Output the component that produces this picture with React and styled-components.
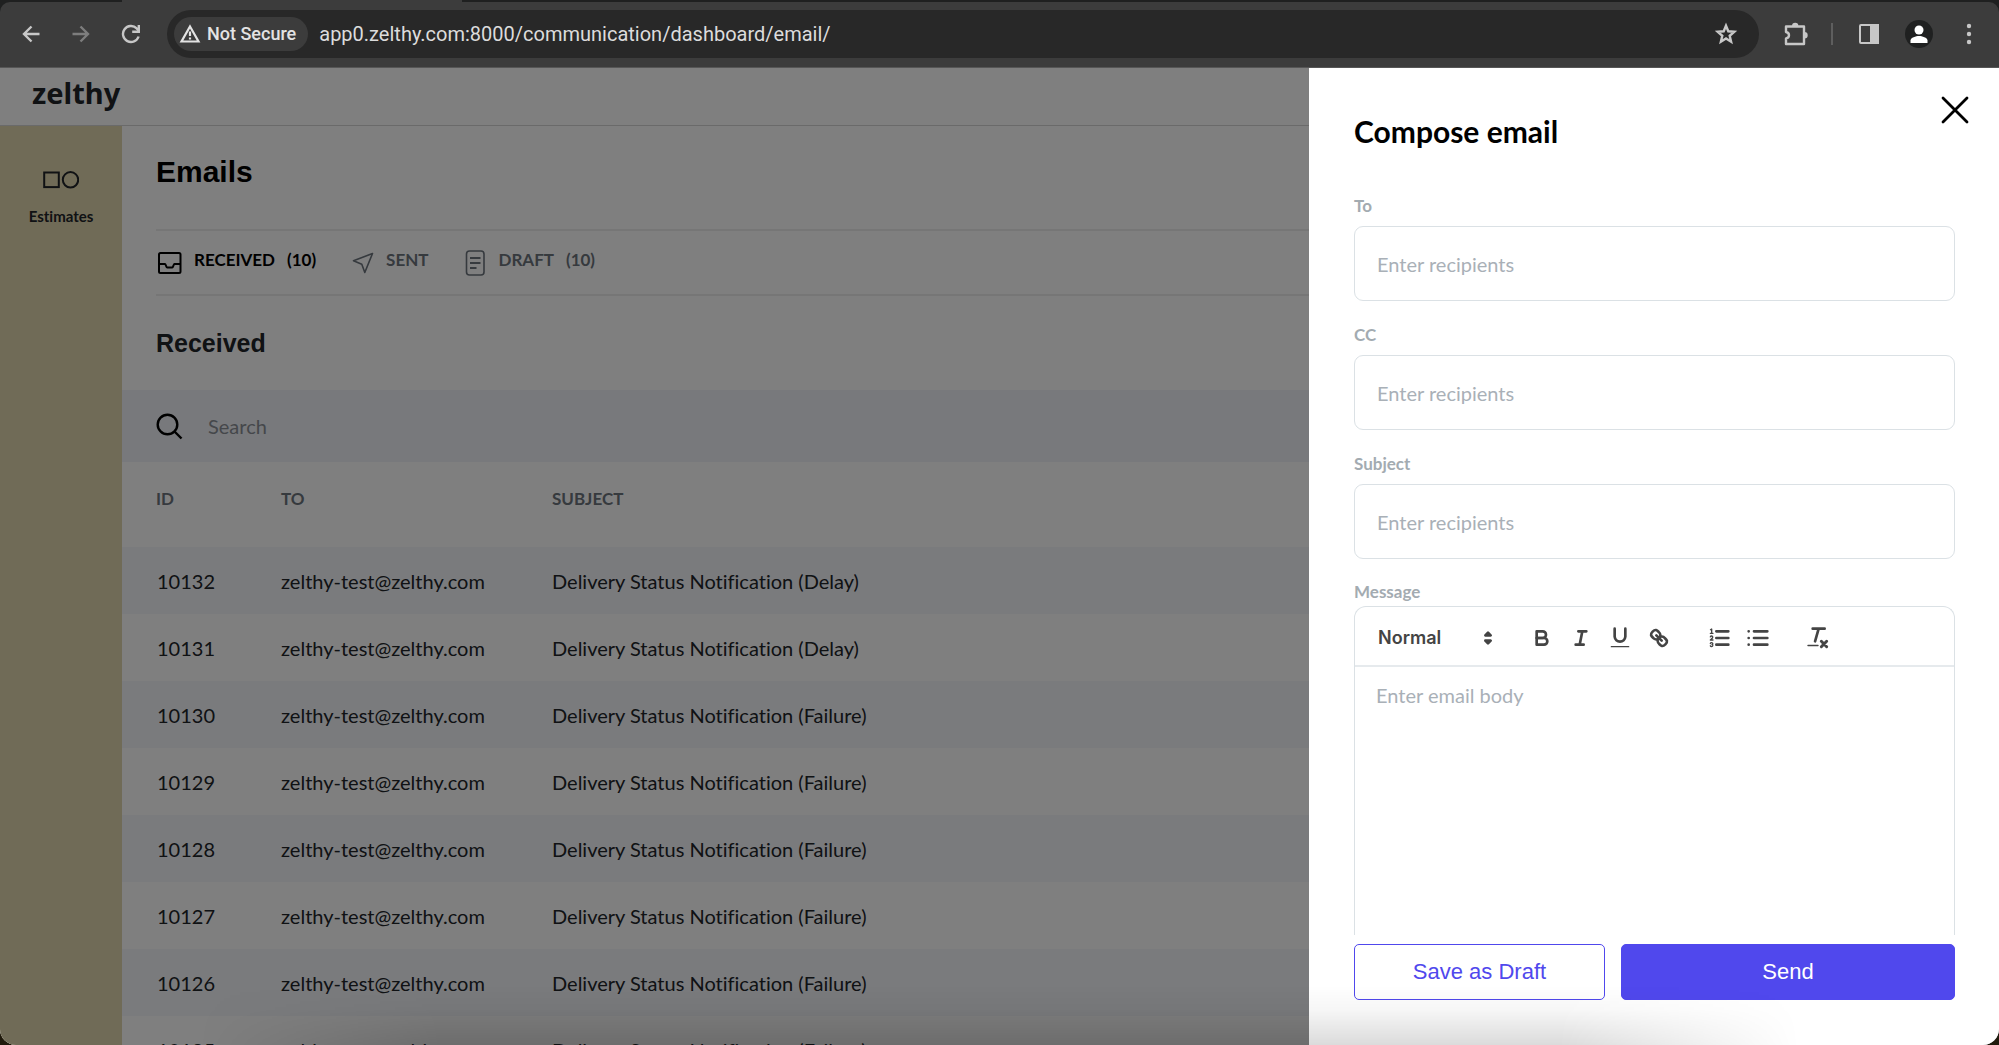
import React from "react";
import styled, { createGlobalStyle } from "styled-components";

const lato = `Lato, "Open Sans", sans-serif`;
const arial = `"Liberation Sans", Arial, sans-serif`;

const GlobalStyle = createGlobalStyle`
  *, *::before, *::after { box-sizing: border-box; }
  body { margin: 0; background: #201a0c; font-family: ${lato}; font-variant-ligatures: none; color: #212429; }
  button, input, textarea, select { font: inherit; color: inherit; }
  button { padding: 0; border: 0; background: none; cursor: pointer; }
  svg { display: block; }
`;

const Window = styled.div`
  height: 100vh;
  display: flex;
  flex-direction: column;
  overflow: hidden;
  background: #1f2020;
  border-radius: 0 0 16px 16px;
`;

const TabStrip = styled.div`
  flex: none;
  height: 2px;
  padding-left: 122px;
`;

const ActiveTab = styled.div`
  width: 340px;
  height: 2px;
  background: #3c3c3c;
`;

const Chrome = styled.header`
  flex: none;
  display: flex;
  align-items: center;
  height: 66px;
  padding: 0 15px 1px 16px;
  border-bottom: 1px solid #565656;
  border-radius: 10px 10px 0 0;
  background: #3c3c3c;
  color: #c7c7c7;
`;

const ChromeButton = styled.button`
  flex: none;
  width: 30px;
  height: 32px;
  display: grid;
  place-items: center;
  color: ${(p) => (p.$dim ? "#7d7d7d" : "#c7c7c7")};
`;

const NavButtons = styled.nav`
  display: flex;
  gap: 20px;
  margin-right: 21px;
`;

const AddressBar = styled.div`
  flex: 1;
  display: flex;
  align-items: center;
  height: 48px;
  padding: 0 18px 0 7px;
  border-radius: 24px;
  background: #282828;
`;

const SecurityChip = styled.button`
  display: flex;
  align-items: center;
  gap: 6px;
  height: 34px;
  padding: 0 12px 0 5px;
  border-radius: 17px;
  background: #3c3c3c;
  color: #e3e3e3;
  font: 500 18px/24px Roboto, sans-serif;
`;

const Url = styled.input`
  flex: 1;
  min-width: 0;
  margin-left: 11px;
  padding: 0;
  border: 0;
  outline: 0;
  background: none;
  color: #dcdcdc;
  font: 400 20px/28px Roboto, sans-serif;
`;

const ChromeTools = styled.div`
  display: flex;
  align-items: center;
  gap: 20px;
  margin-left: 22px;
`;

const Separator = styled.span`
  width: 2px;
  height: 22px;
  background: #5e5e5e;
`;

const SidePanelGroup = styled.div`
  display: flex;
  align-items: center;
  gap: 21px;
`;

const Stage = styled.div`
  flex: 1;
  min-height: 0;
  position: relative;
  display: flex;
  flex-direction: column;
  background: #fff;
`;

const TopBar = styled.div`
  flex: none;
  height: 58px;
  padding: 5px 32px;
  border-bottom: 1px solid #d4d4d4;
  color: #212429;
  font: 700 29px/40px "Noto Sans", sans-serif;
`;

const Body = styled.div`
  flex: 1;
  min-height: 0;
  display: flex;
`;

const Sidebar = styled.aside`
  flex: none;
  width: 122px;
  padding-top: 45px;
  background: #e0d6ae;
`;

const SideLink = styled.a`
  display: flex;
  flex-direction: column;
  align-items: center;
  gap: 17px;
  color: #212429;
  font-size: 15px;
  line-height: 20px;
  font-weight: 700;
  text-decoration: none;
`;

const Main = styled.main`
  flex: 1;
  min-width: 0;
  overflow: hidden;
`;

const Heading = styled.div`
  padding: 24px 0 0 34px;
`;

const Title = styled.h1`
  margin: 0;
  color: #000;
  font: 700 30px/44px ${arial};
`;

const Tabs = styled.nav`
  display: flex;
  gap: 36px;
  height: 67px;
  margin-top: 35px;
  padding-bottom: 6px;
  border-top: 2px solid #ececec;
  border-bottom: 2px solid #ececec;
`;

const Tab = styled.a`
  display: flex;
  align-items: center;
  gap: 12px;
  color: ${(p) => (p.$active ? "#000" : "#6c747d")};
  font-size: 17px;
  line-height: 20px;
  font-weight: 700;
  text-decoration: none;
  svg { margin-top: 6px; }
`;

const Section = styled.h2`
  margin: 0;
  padding: 29px 34px;
  color: #212429;
  font: 700 25px/36px ${arial};
`;

const SearchRow = styled.label`
  display: flex;
  align-items: center;
  gap: 25px;
  height: 72px;
  padding: 0 34px;
  background: #f0f3f8;
  color: #000;
`;

const SearchInput = styled.input`
  flex: 1;
  padding: 0;
  border: 0;
  outline: 0;
  background: none;
  font-size: 20px;
  line-height: 28px;
  &::placeholder { color: #8b8f96; opacity: 1; }
`;

const Table = styled.table`
  width: 100%;
  table-layout: fixed;
  border-collapse: collapse;
  th, td { padding: 0 0 0 34px; text-align: left; white-space: nowrap; }
  th:nth-child(n + 2), td:nth-child(n + 2) { padding-left: 0; }
  th {
    height: 85px;
    padding-bottom: 11px;
    color: #6c747d;
    font-size: 17px;
    line-height: 20px;
    font-weight: 700;
  }
  td { height: 67px; font-size: 20px; line-height: 28px; }
  td:first-child { padding-left: 35px; }
  tbody tr:nth-child(odd) { background: #f4f6fa; }
`;

const IdColumn = styled.col`
  width: 159px;
`;

const ToColumn = styled.col`
  width: 271px;
`;

const Shade = styled.div`
  position: absolute;
  inset: 0;
  background: rgba(0, 0, 0, 0.5);
`;

const Drawer = styled.section`
  position: absolute;
  top: 0;
  right: 0;
  bottom: 0;
  width: 690px;
  display: flex;
  flex-direction: column;
  padding: 43px 44px 45px 45px;
  background: #fff;
`;

const DrawerTitle = styled.h2`
  margin: 0 0 38px;
  color: #000;
  font-size: 30px;
  line-height: 40px;
  font-weight: 700;
`;

const CloseButton = styled.button`
  position: absolute;
  top: 26px;
  right: 28px;
  width: 32px;
  height: 32px;
  display: grid;
  place-items: center;
  color: #000;
`;

const Fields = styled.form`
  flex: 1;
  min-height: 0;
  display: flex;
  flex-direction: column;
`;

const Field = styled.div`
  flex: none;
  display: flex;
  flex-direction: column;
  padding: 5px 0 17px;
`;

const Label = styled.label`
  color: #a3abb1;
  font-size: 17px;
  line-height: 24px;
  font-weight: 700;
`;

const TextInput = styled.input`
  height: 75px;
  margin-top: 8px;
  padding: 0 22px;
  border: 1px solid #dbe1e5;
  border-radius: 9px;
  outline: 0;
  background: #fff;
  font-size: 20px;
  line-height: 28px;
  &::placeholder { color: #a9b0b7; opacity: 1; }
`;

const Message = styled.div`
  flex: 1;
  min-height: 0;
  display: flex;
  flex-direction: column;
  padding-top: 4px;
`;

const Editor = styled.div`
  flex: 1;
  min-height: 0;
  display: flex;
  flex-direction: column;
  margin-top: 2px;
  border: 1px solid #dbe1e5;
  border-bottom: 0;
  border-radius: 12px 12px 0 0;
`;

const Toolbar = styled.div`
  flex: none;
  display: flex;
  align-items: center;
  height: 60px;
  padding: 4px 23px 0;
  border-bottom: 2px solid #e6eaed;
  color: #444;
`;

const FormatPicker = styled.div`
  display: flex;
  align-items: center;
  margin-right: 22px;
`;

const FormatSelect = styled.select`
  width: 98px;
  padding: 0;
  border: 0;
  outline: 0;
  appearance: none;
  background: none;
  font: 600 18px/28px Inter, sans-serif;
`;

const ToolGroup = styled.div`
  display: flex;
  margin-right: 21px;
`;

const ToolButton = styled.button`
  width: 39px;
  height: 32px;
  display: grid;
  place-items: center;
  color: #444;
`;

const BodyInput = styled.textarea`
  flex: 1;
  padding: 14px 21px;
  border: 0;
  outline: 0;
  resize: none;
  background: none;
  font-size: 20px;
  line-height: 28px;
  &::placeholder { color: #a9b0b7; opacity: 1; }
`;

const Actions = styled.div`
  flex: none;
  display: grid;
  grid-template-columns: 251fr 334fr;
  gap: 16px;
  padding-top: 9px;
`;

const ActionButton = styled.button`
  height: 56px;
  border: 1px solid #5048ed;
  border-radius: 5px;
  background: ${(p) => (p.$primary ? "#5048ed" : "transparent")};
  color: ${(p) => (p.$primary ? "#fff" : "#5048ed")};
  font: 400 22px/28px ${arial};
`;

const BottomGlow = styled.div`
  position: absolute;
  left: 10%;
  right: 10%;
  bottom: 0;
  height: 60px;
  pointer-events: none;
  background: linear-gradient(to top, rgba(0, 0, 0, 0.14), rgba(0, 0, 0, 0.03) 60%, transparent);
  mask-image: linear-gradient(to right, transparent, #000 15%, #000 85%, transparent);
`;

const Svg = ({ size = 24, w, h, box = "0 0 24 24", sw = 2, children }) => (
  <svg
    width={w || size}
    height={h || size}
    viewBox={box}
    fill="none"
    stroke="currentColor"
    strokeWidth={sw}
    aria-hidden="true"
  >
    {children}
  </svg>
);

const BackIcon = () => (
  <Svg size={20} box="0 0 20 20" sw={2.4}><path d="M18.500 10H3M10.500 2.500 3 10l7.500 7.500" /></Svg>
);
const ForwardIcon = () => (
  <Svg size={20} box="0 0 20 20" sw={2.4}><path d="M1.500 10H17M9.500 2.500 17 10l-7.500 7.500" /></Svg>
);
const ReloadIcon = () => (
  <Svg size={20} box="0 0 20 20" sw={2.4}>
    <path d="M17.600 12.500A8 8 0 1 1 15.700 4.400L17.500 6.600" />
    <path d="M17.800 1v6.700h-6.600" />
  </Svg>
);
const WarningIcon = () => (
  <Svg size={22} box="0 0 22 22" sw={2.2}>
    <path d="M11 3.500 19.500 18.500h-17Z" /><path d="M11 8.500v4.500M11 14.500v2" />
  </Svg>
);
const StarIcon = () => (
  <Svg size={24} sw={2.4}>
    <path d="M12 3.700l2.300 5.600 6 .5-4.600 4 1.400 5.900L12 16.500l-5.100 3.200 1.400-5.900-4.600-4 6-.5Z" />
  </Svg>
);
const PuzzleIcon = () => (
  <Svg size={26} box="0 0 26 26" sw={2.4}>
    <path d="M3 5.500h18v17.500H3v-5.600c4-.8 4-5.600 0-6.400Z" strokeLinejoin="round" />
    <path d="M9 5a3.200 3.200 0 0 1 6.400 0ZM21.500 11a3.200 3.200 0 0 1 0 6.400Z" fill="currentColor" stroke="none" />
  </Svg>
);
const PanelIcon = () => (
  <Svg size={22} box="0 0 22 22" sw={2}>
    <rect x="2" y="2" width="18" height="18" rx="1" /><path d="M13 2h7v18h-7Z" fill="currentColor" />
  </Svg>
);
const ProfileIcon = () => (
  <svg width="28" height="28" viewBox="0 0 28 28" aria-hidden="true">
    <circle cx="14" cy="14" r="14" fill="#1f2020" />
    <circle cx="14" cy="10" r="4.500" fill="#fff" />
    <path d="M5.500 23v-2.500c0-3 5.500-4.500 8.500-4.500s8.500 1.500 8.500 4.500V23Z" fill="#fff" />
  </svg>
);
const MoreIcon = () => (
  <svg width="6" height="22" viewBox="0 0 6 22" fill="currentColor" aria-hidden="true">
    <circle cx="3" cy="3" r="2.200" /><circle cx="3" cy="11" r="2.200" /><circle cx="3" cy="19" r="2.200" />
  </svg>
);
const ShapesIcon = () => (
  <Svg w={36} h={18} box="0 0 36 18"><rect x="1.200" y="1.500" width="14.600" height="14.600" /><circle cx="27.500" cy="8.800" r="7.700" /></Svg>
);
const InboxIcon = () => (
  <Svg size={26} box="0 0 26 26" sw={2}>
    <rect x="3" y="3" width="21.500" height="20" rx="1.500" />
    <path d="M3 14h6c.8 0 1.200 3.500 2.200 3.500h5c1 0 1.400-3.500 2.200-3.500h6" />
  </Svg>
);
const SendIcon = () => (
  <Svg size={22} box="0 0 22 22" sw={1.600}>
    <path d="M20.500 1.500 1.500 8.700l8.300 3.500 3 8.300Z" strokeLinejoin="round" />
  </Svg>
);
const DraftIcon = () => (
  <Svg w={22} h={26} box="0 0 22 26" sw={1.600}>
    <rect x="2.500" y="1" width="17.500" height="24" rx="3" />
    <path d="M6 8h10.500M6 13h10.500M6 18h6.500" strokeWidth="2" />
  </Svg>
);
const SearchIcon = () => (
  <Svg size={27} box="0 0 27 27" sw={2.400}><circle cx="11.500" cy="11.500" r="9.800" /><path d="m18.500 18.500 7 7" /></Svg>
);
const CloseIcon = () => (
  <Svg size={28} box="0 0 28 28" sw={2.800}><path d="m2 2 24 24M26 2 2 26" strokeLinecap="round" /></Svg>
);

const Tool18 = ({ children }) => (
  <svg
    width="24"
    height="24"
    viewBox="0 0 18 18"
    fill="none"
    stroke="currentColor"
    strokeWidth="2"
    strokeLinecap="round"
    strokeLinejoin="round"
    aria-hidden="true"
  >
    {children}
  </svg>
);
const SortIcon = () => (
  <Tool18>
    <path d="M7 11l2 2 2-2ZM7 7l2-2 2 2Z" fill="currentColor" />
  </Tool18>
);
const BoldIcon = () => (
  <Tool18>
    <path d="M5 4h4.500A2.500 2.500 0 0 1 12 6.500 2.500 2.500 0 0 1 9.500 9H5Z" />
    <path d="M5 9h5.500a2.500 2.500 0 0 1 0 5H5Z" />
  </Tool18>
);
const ItalicIcon = () => (
  <Tool18><path d="M7 4h6M5 14h6M8 14l2-10" /></Tool18>
);
const UnderlineIcon = () => (
  <Tool18>
    <path d="M5 2V8a4.012 4.012 0 0 0 8 0V2" />
    <rect x="2" y="15" width="14" height="1" rx=".5" fill="currentColor" stroke="none" />
  </Tool18>
);
const LinkIcon = () => (
  <Tool18>
    <path d="M7 7l4 4" />
    <path d="M8.900 4.577a3.476 3.476 0 0 1 .36 4.679A3.476 3.476 0 0 1 4.577 8.900C3.185 7.500 2.035 6.400 4.217 4.217S7.500 3.185 8.900 4.577Z" />
    <path d="M13.423 9.100a3.476 3.476 0 0 0-4.679-.36 3.476 3.476 0 0 0 .36 4.679c1.392 1.392 2.500 2.542 4.679.36S14.815 10.500 13.423 9.100Z" />
  </Tool18>
);
const OrderedIcon = () => (
  <Tool18>
    <path d="M7 4h9M7 9h9M7 14h9" />
    <g strokeWidth="1">
      <path d="M2.500 5.500h2M2.600 2.800l.9-.5v3" />
      <path d="M4.500 10.500h-2c0-.234 1.850-1.076 1.850-2.234A.959.959 0 0 0 2.500 8.156" />
      <path d="M2.500 14.846a.959.959 0 0 0 1.850-.11A.7.7 0 0 0 3.750 14a.688.688 0 0 0 .6-.736.959.959 0 0 0-1.850-.109" />
    </g>
  </Tool18>
);
const BulletIcon = () => (
  <Tool18><path d="M6 4h10M6 9h10M6 14h10" /><path d="M2 4h.01M2 9h.01M2 14h.01" /></Tool18>
);
const CleanIcon = () => (
  <Tool18>
    <path d="M5 2h9M6.800 11.500 9.500 2" /><path d="m11.500 11.500 4 4M15.500 11.500l-4 4" strokeWidth="2.200" />
    <rect x="1" y="14" width="8.500" height="1.200" rx=".5" fill="currentColor" stroke="none" />
  </Tool18>
);

const emails = [
  ["10132", "Delay"],
  ["10131", "Delay"],
  ["10130", "Failure"],
  ["10129", "Failure"],
  ["10128", "Failure"],
  ["10127", "Failure"],
  ["10126", "Failure"],
  ["10125", "Failure"],
];

const fields = ["To", "CC", "Subject"];

export default function App() {
  return (
    <Window>
      <GlobalStyle />
      <TabStrip><ActiveTab /></TabStrip>
      <Chrome>
        <NavButtons aria-label="History">
          <ChromeButton aria-label="Back"><BackIcon /></ChromeButton>
          <ChromeButton $dim aria-label="Forward"><ForwardIcon /></ChromeButton>
          <ChromeButton aria-label="Reload"><ReloadIcon /></ChromeButton>
        </NavButtons>
        <AddressBar>
          <SecurityChip><WarningIcon />Not Secure</SecurityChip>
          <Url aria-label="Address" defaultValue="app0.zelthy.com:8000/communication/dashboard/email/" />
          <ChromeButton aria-label="Bookmark"><StarIcon /></ChromeButton>
        </AddressBar>
        <ChromeTools>
          <ChromeButton aria-label="Extensions"><PuzzleIcon /></ChromeButton>
          <SidePanelGroup>
            <Separator />
            <ChromeButton aria-label="Side panel"><PanelIcon /></ChromeButton>
          </SidePanelGroup>
          <ChromeButton aria-label="Profile"><ProfileIcon /></ChromeButton>
          <ChromeButton aria-label="Menu"><MoreIcon /></ChromeButton>
        </ChromeTools>
      </Chrome>
      <Stage>
        <TopBar>zelthy</TopBar>
        <Body>
          <Sidebar>
            <SideLink href="#estimates"><ShapesIcon />Estimates</SideLink>
          </Sidebar>
          <Main>
            <Heading>
              <Title>Emails</Title>
              <Tabs>
                <Tab href="#received" $active><InboxIcon /><span>RECEIVED</span><span>(10)</span></Tab>
                <Tab href="#sent"><SendIcon /><span>SENT</span></Tab>
                <Tab href="#draft"><DraftIcon /><span>DRAFT</span><span>(10)</span></Tab>
              </Tabs>
            </Heading>
            <Section>Received</Section>
            <SearchRow>
              <SearchIcon />
              <SearchInput type="search" placeholder="Search" aria-label="Search" />
            </SearchRow>
            <Table>
              <colgroup>
                <IdColumn />
                <ToColumn />
                <col />
              </colgroup>
              <thead>
                <tr><th>ID</th><th>TO</th><th>SUBJECT</th></tr>
              </thead>
              <tbody>
                {emails.map(([id, kind]) => (
                  <tr key={id}>
                    <td>{id}</td>
                    <td>zelthy-test@zelthy.com</td>
                    <td>Delivery Status Notification ({kind})</td>
                  </tr>
                ))}
              </tbody>
            </Table>
          </Main>
        </Body>
        <Shade />
        <Drawer aria-label="Compose email">
          <DrawerTitle>Compose email</DrawerTitle>
          <CloseButton aria-label="Close"><CloseIcon /></CloseButton>
          <Fields onSubmit={(e) => e.preventDefault()}>
            {fields.map((name) => (
              <Field key={name}>
                <Label htmlFor={name}>{name}</Label>
                <TextInput id={name} placeholder="Enter recipients" />
              </Field>
            ))}
            <Message>
              <Label htmlFor="message">Message</Label>
              <Editor>
                <Toolbar>
                  <FormatPicker>
                    <FormatSelect aria-label="Text format"><option>Normal</option></FormatSelect>
                    <SortIcon />
                  </FormatPicker>
                  <ToolGroup>
                    <ToolButton type="button" aria-label="Bold"><BoldIcon /></ToolButton>
                    <ToolButton type="button" aria-label="Italic"><ItalicIcon /></ToolButton>
                    <ToolButton type="button" aria-label="Underline"><UnderlineIcon /></ToolButton>
                    <ToolButton type="button" aria-label="Link"><LinkIcon /></ToolButton>
                  </ToolGroup>
                  <ToolGroup>
                    <ToolButton type="button" aria-label="Numbered list"><OrderedIcon /></ToolButton>
                    <ToolButton type="button" aria-label="Bulleted list"><BulletIcon /></ToolButton>
                  </ToolGroup>
                  <ToolButton type="button" aria-label="Clear formatting"><CleanIcon /></ToolButton>
                </Toolbar>
                <BodyInput id="message" placeholder="Enter email body" />
              </Editor>
            </Message>
            <Actions>
              <ActionButton type="button">Save as Draft</ActionButton>
              <ActionButton type="submit" $primary>Send</ActionButton>
            </Actions>
          </Fields>
        </Drawer>
        <BottomGlow />
      </Stage>
    </Window>
  );
}
